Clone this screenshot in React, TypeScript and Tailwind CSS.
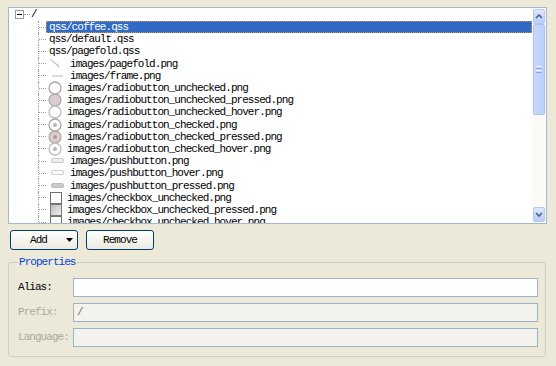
import React from 'react';

type IconKind =
  | 'pagefold'
  | 'frame'
  | 'radio'
  | 'radioPressed'
  | 'radioHover'
  | 'radioChecked'
  | 'radioCheckedPressed'
  | 'radioCheckedHover'
  | 'push'
  | 'pushHover'
  | 'pushPressed'
  | 'check'
  | 'checkPressed'
  | 'checkHover';

const items: { name: string; icon?: IconKind; selected?: boolean }[] = [
  { name: 'qss/coffee.qss', selected: true },
  { name: 'qss/default.qss' },
  { name: 'qss/pagefold.qss' },
  { name: 'images/pagefold.png', icon: 'pagefold' },
  { name: 'images/frame.png', icon: 'frame' },
  { name: 'images/radiobutton_unchecked.png', icon: 'radio' },
  { name: 'images/radiobutton_unchecked_pressed.png', icon: 'radioPressed' },
  { name: 'images/radiobutton_unchecked_hover.png', icon: 'radioHover' },
  { name: 'images/radiobutton_checked.png', icon: 'radioChecked' },
  { name: 'images/radiobutton_checked_pressed.png', icon: 'radioCheckedPressed' },
  { name: 'images/radiobutton_checked_hover.png', icon: 'radioCheckedHover' },
  { name: 'images/pushbutton.png', icon: 'push' },
  { name: 'images/pushbutton_hover.png', icon: 'pushHover' },
  { name: 'images/pushbutton_pressed.png', icon: 'pushPressed' },
  { name: 'images/checkbox_unchecked.png', icon: 'check' },
  { name: 'images/checkbox_unchecked_pressed.png', icon: 'checkPressed' },
  { name: 'images/checkbox_unchecked_hover.png', icon: 'checkHover' },
];

function ItemIcon({ kind }: { kind: IconKind }) {
  const svg = (children: React.ReactNode) => (
    <svg width="16" height="14" viewBox="0 0 16 14" className="overflow-visible">
      {children}
    </svg>
  );
  switch (kind) {
    case 'pagefold':
      return svg(
        <>
          <path d="M3 2 L12 9 L13 11 L11 10 Z" fill="#c9ced6" />
          <path d="M3 2 L12 9" stroke="#b8bec8" strokeWidth="1" />
        </>
      );
    case 'frame':
      return svg(<rect x="5" y="6" width="11" height="2" fill="#dadada" />);
    case 'radio':
    case 'radioHover':
      return svg(
        <circle cx="8" cy="7" r="6" fill="#fdfdfd" stroke={kind === 'radio' ? '#a8a8a8' : '#bdbdbd'} strokeWidth="1.3" />
      );
    case 'radioPressed':
      return svg(<circle cx="8" cy="7" r="6" fill="#d9cfcf" stroke="#b3a9a9" strokeWidth="1.3" />);
    case 'radioChecked':
    case 'radioCheckedHover':
      return svg(
        <>
          <circle cx="8" cy="7" r="6" fill="#fdfdfd" stroke={kind === 'radioChecked' ? '#a8a8a8' : '#bdbdbd'} strokeWidth="1.3" />
          <circle cx="8" cy="7" r="2" fill="#b5b5b5" />
        </>
      );
    case 'radioCheckedPressed':
      return svg(
        <>
          <circle cx="8" cy="7" r="6" fill="#d9cfcf" stroke="#b3a9a9" strokeWidth="1.3" />
          <circle cx="8" cy="7" r="2" fill="#b09a9a" />
        </>
      );
    case 'push':
      return svg(<rect x="4.5" y="4.5" width="12" height="4" rx="1.5" fill="#efefef" stroke="#c8c8c8" />);
    case 'pushHover':
      return svg(<rect x="4.5" y="4.5" width="12" height="4" rx="1.5" fill="#fcfcfc" stroke="#d0d0d0" />);
    case 'pushPressed':
      return svg(<rect x="4.5" y="4.5" width="12" height="4" rx="1.5" fill="#cbcbcb" stroke="#bdbdbd" />);
    case 'check':
    case 'checkHover':
      return svg(<rect x="3.5" y="1.5" width="11" height="11" fill="#fdfdfd" stroke="#6f6f6f" />);
    case 'checkPressed':
      return svg(
        <>
          <defs>
            <linearGradient id="cp" x1="0" y1="0" x2="1" y2="1">
              <stop offset="0" stopColor="#b9b9b9" />
              <stop offset="1" stopColor="#f2f2f2" />
            </linearGradient>
          </defs>
          <rect x="3.5" y="1.5" width="11" height="11" fill="url(#cp)" stroke="#7a7a7a" />
        </>
      );
  }
}

function ScrollButton({ up }: { up?: boolean }) {
  return (
    <div className="h-[15px] mx-px rounded-[2px] border border-[#b4c8f6] bg-gradient-to-b from-[#dce6fe] to-[#b9cdfa] flex items-center justify-center">
      <svg width="8" height="5" viewBox="0 0 8 5">
        <path
          d={up ? 'M1 4 L4 1 L7 4' : 'M1 1 L4 4 L7 1'}
          stroke="#4d6185"
          strokeWidth="1.6"
          fill="none"
        />
      </svg>
    </div>
  );
}

function Scrollbar() {
  return (
    <div className="w-[14px] flex flex-col bg-[#fbfaf6] py-px">
      <ScrollButton up />
      <div className="h-[91px] mx-px rounded-[2px] border border-[#aac0f2] bg-gradient-to-r from-[#c9d8fc] to-[#bdcffb] flex flex-col items-center justify-center gap-px">
        <div className="w-[6px] h-px bg-[#eef3ff]" />
        <div className="w-[6px] h-px bg-[#8fa9e6]" />
        <div className="w-[6px] h-px bg-[#eef3ff]" />
        <div className="w-[6px] h-px bg-[#8fa9e6]" />
      </div>
      <div className="flex-1" />
      <ScrollButton />
    </div>
  );
}

export default function App() {
  return (
    <div className="w-[556px] h-[366px] bg-[#ece9d8] pt-[7px] pl-[8px] font-mono text-[11px] tracking-[-0.95px] text-black">
      {/* Resource tree */}
      <div className="w-[539px] h-[217px] border border-[#a5b7c9] bg-white flex">
        <div className="flex-1 overflow-hidden">
          <div className="h-[13px] flex items-center pl-[6px]">
            <div className="w-[9px] h-[9px] border border-[#919b9c] bg-white flex items-center justify-center">
              <div className="w-[5px] h-px bg-black" />
            </div>
            <div className="w-[6px] border-t border-dotted border-[#a0a0a0]" />
            <span className="ml-px leading-[13px]">/</span>
          </div>
          {items.map((item) => {
            const narrow = item.icon?.startsWith('radio') || item.icon?.startsWith('check');
            return (
              <div key={item.name} className="h-[12.2px] flex items-stretch pl-[29px]">
                <div className="w-[8px] border-l border-dotted border-[#a0a0a0] flex items-center">
                  <div className="w-full border-t border-dotted border-[#a0a0a0]" />
                </div>
                {item.icon ? (
                  <div className="flex items-center">
                    <div className="ml-px w-[16px] flex items-center">
                      <ItemIcon kind={item.icon} />
                    </div>
                    <span className={`${narrow ? 'ml-[4px]' : 'ml-[7px]'} whitespace-nowrap leading-[12px]`}>
                      {item.name}
                    </span>
                  </div>
                ) : (
                  <div
                    className={
                      item.selected
                        ? 'flex-1 flex items-center px-[3px] bg-[#316ac5] text-white outline outline-1 outline-dotted outline-[#d49c40] -outline-offset-1'
                        : 'flex items-center px-[3px]'
                    }
                  >
                    <span className="whitespace-nowrap leading-[12px]">{item.name}</span>
                  </div>
                )}
              </div>
            );
          })}
        </div>
        <Scrollbar />
      </div>

      {/* Add / Remove */}
      <div className="mt-[6px] ml-[2px] flex gap-[8px]">
        <button className="w-[68px] h-[20px] rounded-[3px] border border-[#003c74] bg-gradient-to-b from-white to-[#ece9de] flex items-center pl-[19px] pr-[4px]">
          <span>Add</span>
          <svg width="7" height="4" viewBox="0 0 7 4" className="ml-auto">
            <path d="M0 0 H7 L3.5 4 Z" fill="#000" />
          </svg>
        </button>
        <button className="w-[68px] h-[20px] rounded-[3px] border border-[#003c74] bg-gradient-to-b from-white to-[#ece9de] flex items-center justify-center">
          Remove
        </button>
      </div>

      {/* Properties */}
      <div className="relative mt-[12px] w-[538px] h-[95px] rounded-[3px] border border-[#d0d0bf] pt-[15px] pl-[9px] flex flex-col gap-[6px]">
        <span className="absolute left-[9px] -top-[7px] px-px bg-[#ece9d8] text-[#0046d5] leading-[13px]">
          Properties
        </span>
        <div className="flex items-center h-[19px]">
          <span className="w-[55px]">Alias:</span>
          <div className="w-[465px] h-[19px] border border-[#9db2c9] bg-white" />
        </div>
        <div className="flex items-center h-[19px]">
          <span className="w-[55px] text-[#aca899]">Prefix:</span>
          <div className="w-[465px] h-[19px] border border-[#9db2c9] bg-[#f3f2ec] flex items-center pl-[3px] text-[#6d6d6d]">
            /
          </div>
        </div>
        <div className="flex items-center h-[19px]">
          <span className="w-[55px] text-[#aca899]">Language:</span>
          <div className="w-[465px] h-[19px] border border-[#9db2c9] bg-[#f3f2ec]" />
        </div>
      </div>
    </div>
  );
}
